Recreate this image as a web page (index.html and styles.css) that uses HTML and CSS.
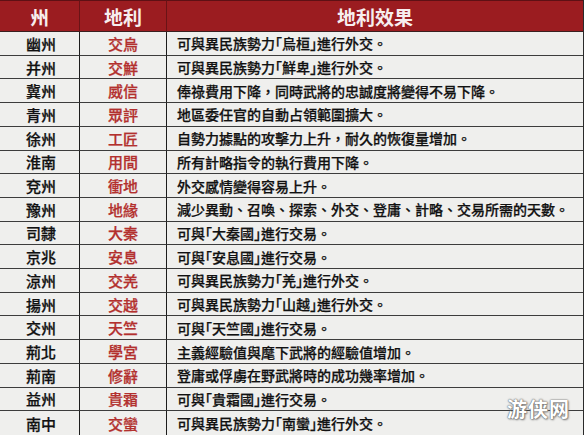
FILE: index.html
```html
<!DOCTYPE html>
<html lang="zh-Hant">
<head>
<meta charset="utf-8">
<link rel="stylesheet" href="styles.css">
</head>
<body>
<div class="page">
  <div class="table">
    <div class="hd c1">州</div><div class="hd c2">地利</div><div class="hd c3">地利效果</div>

    <div class="cell c1">幽州</div><div class="cell c2">交烏</div><div class="cell c3">可與異民族勢力<span class="br">「</span>烏桓<span class="br">」</span>進行外交。</div>
    <div class="cell c1">并州</div><div class="cell c2">交鮮</div><div class="cell c3">可與異民族勢力<span class="br">「</span>鮮卑<span class="br">」</span>進行外交。</div>
    <div class="cell c1">冀州</div><div class="cell c2">威信</div><div class="cell c3">俸祿費用下降，同時武將的忠誠度將變得不易下降。</div>
    <div class="cell c1">青州</div><div class="cell c2">眾評</div><div class="cell c3">地區委任官的自動占領範圍擴大。</div>
    <div class="cell c1">徐州</div><div class="cell c2">工匠</div><div class="cell c3">自勢力據點的攻擊力上升，耐久的恢復量增加。</div>
    <div class="cell c1">淮南</div><div class="cell c2">用間</div><div class="cell c3">所有計略指令的執行費用下降。</div>
    <div class="cell c1">兗州</div><div class="cell c2">衝地</div><div class="cell c3">外交感情變得容易上升。</div>
    <div class="cell c1">豫州</div><div class="cell c2">地緣</div><div class="cell c3">減少異動、召喚、探索、外交、登庸、計略、交易所需的天數。</div>
    <div class="cell c1">司隸</div><div class="cell c2">大秦</div><div class="cell c3">可與<span class="br">「</span>大秦國<span class="br">」</span>進行交易。</div>
    <div class="cell c1">京兆</div><div class="cell c2">安息</div><div class="cell c3">可與<span class="br">「</span>安息國<span class="br">」</span>進行交易。</div>
    <div class="cell c1">涼州</div><div class="cell c2">交羌</div><div class="cell c3">可與異民族勢力<span class="br">「</span>羌<span class="br">」</span>進行外交。</div>
    <div class="cell c1">揚州</div><div class="cell c2">交越</div><div class="cell c3">可與異民族勢力<span class="br">「</span>山越<span class="br">」</span>進行外交。</div>
    <div class="cell c1">交州</div><div class="cell c2">天竺</div><div class="cell c3">可與<span class="br">「</span>天竺國<span class="br">」</span>進行交易。</div>
    <div class="cell c1">荊北</div><div class="cell c2">學宮</div><div class="cell c3">主義經驗值與麾下武將的經驗值增加。</div>
    <div class="cell c1">荊南</div><div class="cell c2">修辭</div><div class="cell c3">登庸或俘虜在野武將時的成功幾率增加。</div>
    <div class="cell c1">益州</div><div class="cell c2">貴霜</div><div class="cell c3">可與<span class="br">「</span>貴霜國<span class="br">」</span>進行交易。</div>
    <div class="cell c1 last">南中</div><div class="cell c2 last">交蠻</div><div class="cell c3 last">可與異民族勢力<span class="br">「</span>南蠻<span class="br">」</span>進行外交。</div>
  </div>
  <div class="mark">游侠网</div>
</div>
</body>
</html>
```

FILE: styles.css
```css
html, body {
  margin: 0;
  padding: 0;
  background: #efefed;
}

.page {
  position: relative;
  width: 584px;
  height: 435px;
  overflow: hidden;
  font-family: "Noto Sans CJK TC Medium", "Noto Sans CJK TC", "Noto Sans CJK SC", sans-serif;
}

.table {
  display: grid;
  grid-template-columns: 80px 87px 1fr;
  grid-template-rows: 32px repeat(17, 1fr);
  height: 435px;
  width: 584px;
  box-sizing: border-box;
  border-right: 1px solid #2a2a2a;
  background: #efefed;
}

.hd {
  background: #9b1c20;
  color: #f7eeee;
  font-family: "Noto Sans CJK TC", "Noto Sans CJK SC", sans-serif;
  font-size: 19px;
  font-weight: 700;
  display: flex;
  align-items: center;
  justify-content: center;
  border-top: 1px solid #5e1014;
  border-bottom: 1px solid #3a2020;
  line-height: 1;
}

.hd.c1, .hd.c2 {
  border-right: 1px solid #6a1316;
}

.cell {
  display: flex;
  align-items: center;
  border-bottom: 1px solid #3c3c3c;
  font-size: 14px;
  font-weight: 500;
  color: #111111;
  line-height: 1;
  white-space: nowrap;
  -webkit-text-stroke: 0.25px currentColor;
}

.cell.last {
  border-bottom: none;
}

.cell.c1, .cell.c2 {
  justify-content: center;
  border-right: 1.5px solid #1c1c1c;
}

.cell.c1 {
  padding-left: 3px;
  font-size: 15px;
}

.cell.c2 {
  color: #b3302e;
  font-size: 15px;
}

.cell.c3 {
  padding-left: 10px;
}

.br {
  font-feature-settings: "halt";
}

.mark {
  position: absolute;
  right: 14px;
  bottom: 12px;
  font-family: "Noto Sans CJK SC", sans-serif;
  font-size: 20px;
  font-weight: 700;
  color: #ffffff;
  letter-spacing: 1px;
  text-shadow: 0 0 1px #555, 0 0 2px #777, 1px 1px 2px #888;
}
```
